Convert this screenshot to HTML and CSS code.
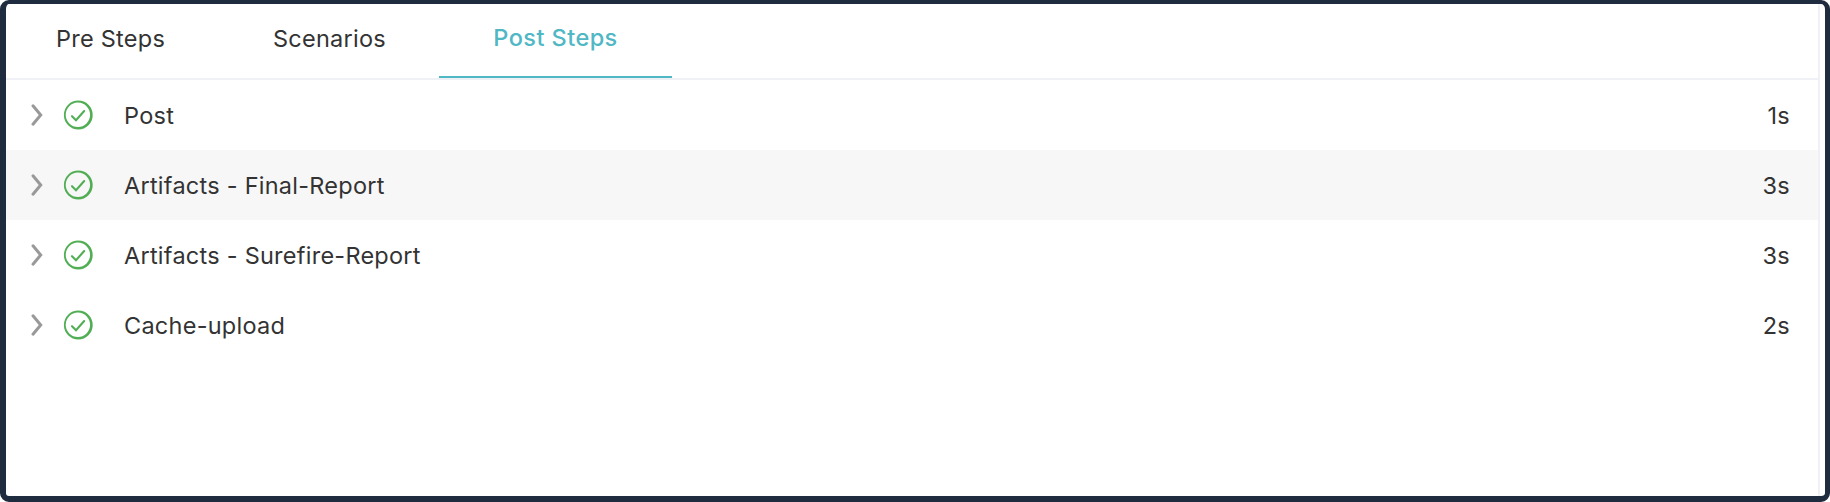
FILE: index.html
```html
<!DOCTYPE html>
<html lang="en">
<head>
<meta charset="utf-8">
<title>Steps</title>
<link rel="stylesheet" href="styles.css">
</head>
<body>
<svg class="defs" width="0" height="0" aria-hidden="true">
  <symbol id="chevron" viewBox="0 0 12 22"><path d="M2 1.8 9.7 11 2 20.2" fill="none" stroke="#999" stroke-width="3" stroke-linecap="round" stroke-linejoin="miter"/></symbol>
  <symbol id="check" viewBox="0 0 30 30">
    <path fill="#52ae55" fill-rule="evenodd" d="M15.3 .6a14.4 14.4 0 1 1 0 28.8A14.4 14.4 0 0 1 15.3 .6ZM14.9 2.6a12.2 12.2 0 1 0 0 24.4 12.2 12.2 0 0 0 0-24.4Z"/>
    <path d="M9 16.2 13 20.2 21.2 11" fill="none" stroke="#52ae55" stroke-width="2.1" stroke-linecap="round"/>
  </symbol>
</svg>
<main class="panel">
  <div class="content">
    <nav class="tabs">
      <a class="tab tab-pre">Pre Steps</a>
      <a class="tab tab-scenarios">Scenarios</a>
      <a class="tab active">Post Steps</a>
    </nav>
    <div class="row"><svg class="chevron"><use href="#chevron"/></svg><svg class="check"><use href="#check"/></svg><span class="name">Post</span><span class="time">1s</span></div>
    <div class="row hover"><svg class="chevron"><use href="#chevron"/></svg><svg class="check"><use href="#check"/></svg><span class="name">Artifacts - Final-Report</span><span class="time">3s</span></div>
    <div class="row"><svg class="chevron"><use href="#chevron"/></svg><svg class="check"><use href="#check"/></svg><span class="name">Artifacts - Surefire-Report</span><span class="time">3s</span></div>
    <div class="row"><svg class="chevron"><use href="#chevron"/></svg><svg class="check"><use href="#check"/></svg><span class="name">Cache-upload</span><span class="time">2s</span></div>
  </div>
</main>
</body>
</html>
```
FILE: styles.css
```css
* { box-sizing: border-box; }
body {
  margin: 0;
  background: #fff;
  color: #333;
  font-family: Inter, "Liberation Sans", sans-serif;
  font-size: 23.5px;
  letter-spacing: 0.25px;
  overflow: hidden;
}
.defs { display: block; }
.panel {
  width: 1830px;
  height: 502px;
  border: solid #1f2b3f;
  border-width: 4px 5px 6px 6px;
  border-radius: 9px;
  padding-right: 5px;
}
.content {
  height: 100%;
  border-right: 2px solid #f0f0f7;
}
.tabs {
  display: flex;
  height: 76px;
  border-bottom: 2px solid #f0f0f7;
}
.tab {
  height: 74px;
  padding-top: 2px;
  line-height: 66px;
  white-space: nowrap;
}
.tab-pre { width: 213px; padding-left: 50px; }
.tab-scenarios { width: 220px; padding-left: 54px; }
.active {
  width: 233px;
  padding: 0;
  text-align: center;
  color: #50b7c5;
  font-weight: 500;
  letter-spacing: 0.45px;
  line-height: 67px;
  border-bottom: 2px solid #50b7c5;
}
.row {
  display: flex;
  align-items: center;
  height: 70px;
  padding: 0 28px 0 25px;
}
.hover { background: #f7f7f7; }
.chevron { width: 12px; height: 22px; }
.check { width: 30px; height: 30px; margin-left: 20px; }
.name { flex: 1; margin-left: 31px; }
.name, .time { line-height: 28px; padding-top: 2px; }
```
